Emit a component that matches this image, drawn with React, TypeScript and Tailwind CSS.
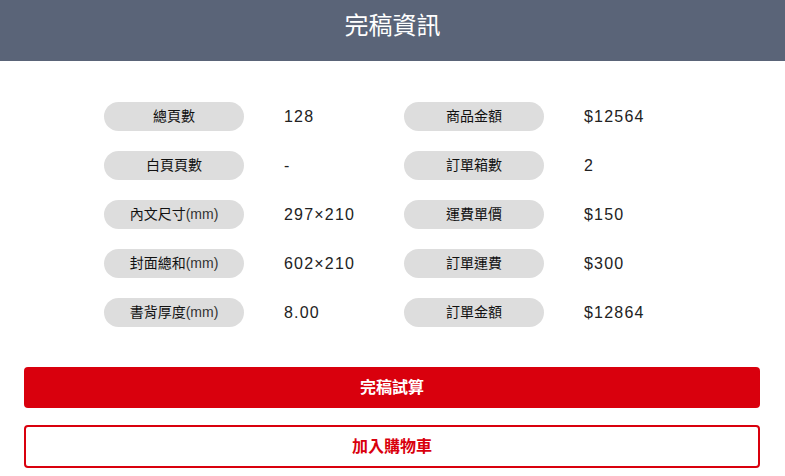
const left = [
  { label: "總頁數", unit: "", value: "128" },
  { label: "白頁頁數", unit: "", value: "-" },
  { label: "內文尺寸", unit: "(mm)", value: "297×210" },
  { label: "封面總和", unit: "(mm)", value: "602×210" },
  { label: "書背厚度", unit: "(mm)", value: "8.00" },
];

const right = [
  { label: "商品金額", unit: "", value: "$12564" },
  { label: "訂單箱數", unit: "", value: "2" },
  { label: "運費單價", unit: "", value: "$150" },
  { label: "訂單運費", unit: "", value: "$300" },
  { label: "訂單金額", unit: "", value: "$12864" },
];

function Row({ label, unit, value }: { label: string; unit: string; value: string }) {
  return (
    <div className="flex items-center h-[29px]">
      <div className="w-[140px] h-[29px] rounded-full bg-[#dddddd] flex items-center justify-center text-[14px] text-[#111]">
        {label}
        {unit && <span className="text-[#333]">{unit}</span>}
      </div>
      <div className="ml-[40px] text-[16px] tracking-[1.2px] text-[#222]">{value}</div>
    </div>
  );
}

export default function App() {
  return (
    <div
      className="w-[785px] h-[476px] bg-white overflow-hidden"
      style={{ fontFamily: '"Liberation Sans", Arial, "Noto Sans CJK TC", sans-serif' }}
    >
      <header className="h-[61px] bg-[#5a6478] flex items-center justify-center pb-[10px]">
        <h1 className="text-white text-[24px]">完稿資訊</h1>
      </header>

      <div className="flex pl-[104px] pt-[41px]">
        <div className="w-[300px] flex flex-col gap-[20px]">
          {left.map((r) => (
            <Row key={r.label} {...r} />
          ))}
        </div>
        <div className="w-[300px] flex flex-col gap-[20px]">
          {right.map((r) => (
            <Row key={r.label} {...r} />
          ))}
        </div>
      </div>

      <div className="px-[24px] mt-[40px] flex flex-col gap-[17px] w-[784px]">
        <button className="h-[41px] w-full rounded-[4px] bg-[#d9000d] text-white text-[16px] font-bold">
          完稿試算
        </button>
        <button className="h-[43px] w-full rounded-[4px] border-2 border-[#d9000d] bg-white text-[#d9000d] text-[16px] font-bold">
          加入購物車
        </button>
      </div>
    </div>
  );
}
